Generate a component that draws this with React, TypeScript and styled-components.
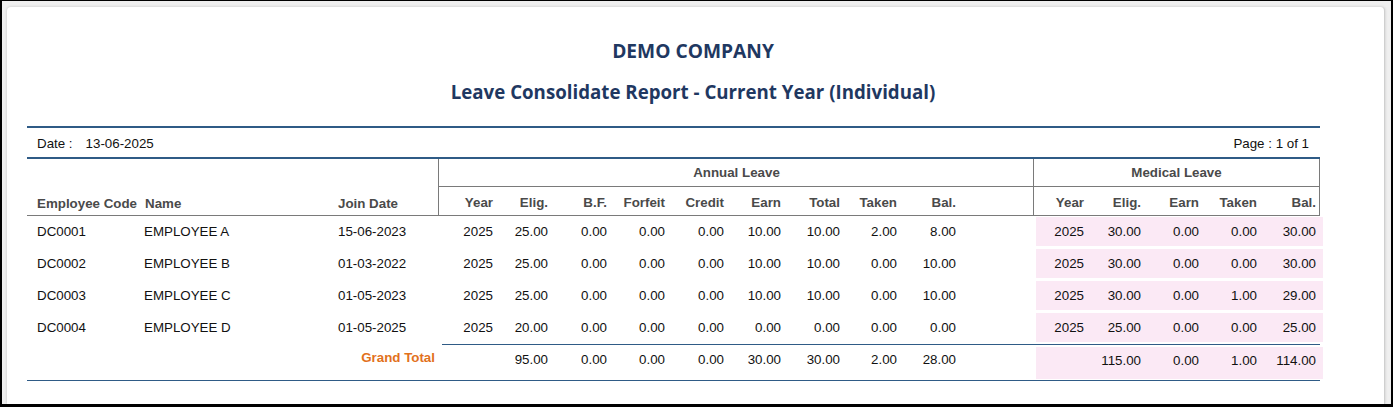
import styled, { createGlobalStyle } from "styled-components"

const GlobalStyle = createGlobalStyle`
  html, body { margin: 0; padding: 0; background: #000; }
  body { font-family: "Liberation Sans", Arial, sans-serif; }
  * { box-sizing: border-box; }
`

const annualCols = [58, 55, 59, 58, 59, 57, 59, 57, 59, 74]
const medicalCols = [52, 57, 58, 58, 59]

const annualHeads = ["Year", "Elig.", "B.F.", "Forfeit", "Credit", "Earn", "Total", "Taken", "Bal.", ""]
const medicalHeads = ["Year", "Elig.", "Earn", "Taken", "Bal."]

const rows = [
  {
    code: "DC0001", name: "EMPLOYEE A", join: "15-06-2023",
    annual: ["2025", "25.00", "0.00", "0.00", "0.00", "10.00", "10.00", "2.00", "8.00", ""],
    medical: ["2025", "30.00", "0.00", "0.00", "30.00"],
  },
  {
    code: "DC0002", name: "EMPLOYEE B", join: "01-03-2022",
    annual: ["2025", "25.00", "0.00", "0.00", "0.00", "10.00", "10.00", "0.00", "10.00", ""],
    medical: ["2025", "30.00", "0.00", "0.00", "30.00"],
  },
  {
    code: "DC0003", name: "EMPLOYEE C", join: "01-05-2023",
    annual: ["2025", "25.00", "0.00", "0.00", "0.00", "10.00", "10.00", "0.00", "10.00", ""],
    medical: ["2025", "30.00", "0.00", "1.00", "29.00"],
  },
  {
    code: "DC0004", name: "EMPLOYEE D", join: "01-05-2025",
    annual: ["2025", "20.00", "0.00", "0.00", "0.00", "0.00", "0.00", "0.00", "0.00", ""],
    medical: ["2025", "25.00", "0.00", "0.00", "25.00"],
  },
]

const totals = {
  annual: ["", "95.00", "0.00", "0.00", "0.00", "30.00", "30.00", "2.00", "28.00", ""],
  medical: ["", "115.00", "0.00", "1.00", "114.00"],
}

const tpl = (cols: number[]) => cols.map((c) => `${c}px`).join(" ")

const App = () => {
  return (
    <>
      <GlobalStyle />
      <Frame>
        <Panel>
          <Report>
            <TitleBlock>
              <Company>DEMO COMPANY</Company>
              <ReportName>Leave Consolidate Report - Current Year (Individual)</ReportName>
            </TitleBlock>

            <DateRow>
              <span>
                Date :<DateValue>13-06-2025</DateValue>
              </span>
              <span>Page : 1 of 1</span>
            </DateRow>

            <HeadRow>
              <LeftHead>Employee Code</LeftHead>
              <LeftHead>Name</LeftHead>
              <LeftHead>Join Date</LeftHead>
              <Group>
                <GroupTitle>Annual Leave</GroupTitle>
                <ColGrid cols={tpl(annualCols)}>
                  {annualHeads.map((h, i) => (
                    <HeadCell key={i}>{h}</HeadCell>
                  ))}
                </ColGrid>
              </Group>
              <Group last>
                <GroupTitle>Medical Leave</GroupTitle>
                <ColGrid cols={tpl([54, 57, 58, 58, 59])}>
                  {medicalHeads.map((h, i) => (
                    <HeadCell key={i}>{h}</HeadCell>
                  ))}
                </ColGrid>
              </Group>
            </HeadRow>

            {rows.map((r) => (
              <DataRow key={r.code}>
                <TextCell pad={10}>{r.code}</TextCell>
                <TextCell pad={5}>{r.name}</TextCell>
                <TextCell pad={6}>{r.join}</TextCell>
                <ColGrid cols={tpl(annualCols)}>
                  {r.annual.map((v, i) => (
                    <NumCell key={i}>{v}</NumCell>
                  ))}
                </ColGrid>
                <Pink cols={tpl(medicalCols)}>
                  {r.medical.map((v, i) => (
                    <NumCell key={i}>{v}</NumCell>
                  ))}
                </Pink>
              </DataRow>
            ))}

            <TotalRow>
              <GrandLabel>Grand Total</GrandLabel>
              <TotalBlock>
                <ColGrid cols={tpl([55, ...annualCols.slice(1)])}>
                  {totals.annual.map((v, i) => (
                    <NumCell key={i}>{v}</NumCell>
                  ))}
                </ColGrid>
                <Pink cols={tpl(medicalCols)}>
                  {totals.medical.map((v, i) => (
                    <NumCell key={i}>{v}</NumCell>
                  ))}
                </Pink>
              </TotalBlock>
            </TotalRow>
          </Report>
        </Panel>
      </Frame>
    </>
  )
}

export default App

const Frame = styled.div`
  width: 1393px;
  height: 407px;
  border-style: solid;
  border-color: #000;
  border-width: 1px 2px 3px 2px;
  background: #efefef;
  padding: 6px 6px 0 5px;
`

const Panel = styled.div`
  height: 100%;
  background: #fff;
  border-radius: 4px 4px 0 0;
  border-right: 1px solid #cfcfcf;
  box-shadow: 0 0 3px rgba(0, 0, 0, 0.18);
  padding-left: 20px;
`

const Report = styled.div`
  width: 1293px;
  font-size: 13.33px;
`

const TitleBlock = styled.div`
  height: 121px;
  padding: 32px 0 0 39px;
  text-align: center;
  color: #1f3861;
  font-family: "Open Sans", "Noto Sans", sans-serif;
  font-weight: 700;
  border-bottom: 2px solid #2f5b86;
`

const Company = styled.div`
  font-size: 19.2px;
  line-height: 24px;
`

const ReportName = styled.div`
  margin-top: 17px;
  font-size: 18.7px;
  line-height: 24px;
`

const DateRow = styled.div`
  height: 31px;
  display: flex;
  justify-content: space-between;
  align-items: center;
  padding: 1px 11px 0 10px;
  color: #111;
  border-bottom: 2px solid #2f5b86;
`

const DateValue = styled.span`
  margin-left: 13px;
`

const HeadRow = styled.div`
  display: grid;
  grid-template-columns: 112px 193px 107px 595px 286px;
  border-bottom: 1px solid #7a7a7a;
`

const LeftHead = styled.div`
  align-self: end;
  padding: 0 0 4px 10px;
  font-weight: 700;
  color: #4a4a4a;
  white-space: nowrap;
  &:nth-child(2),
  &:nth-child(3) {
    padding-left: 6px;
  }
`

const Group = styled.div<{ last?: boolean }>`
  border-left: 1px solid #7a7a7a;
  border-right: ${(p) => (p.last ? "1px solid #7a7a7a" : "none")};
  margin-left: -1px;
`

const GroupTitle = styled.div`
  height: 28px;
  line-height: 28px;
  text-align: center;
  font-weight: 700;
  color: #4a4a4a;
  border-bottom: 1px solid #7a7a7a;
`

const ColGrid = styled.div<{ cols: string }>`
  display: grid;
  grid-template-columns: ${(p) => p.cols};
`

const HeadCell = styled.div`
  height: 28px;
  padding: 8px 4px 0 0;
  text-align: right;
  font-weight: 700;
  color: #4a4a4a;
`

const DataRow = styled.div`
  display: grid;
  grid-template-columns: 112px 193px 107px 595px 286px;
  height: 32px;
  padding-bottom: 2px;
  align-items: center;
`

const TextCell = styled.div<{ pad: number }>`
  padding-left: ${(p) => p.pad}px;
  color: #111;
  white-space: nowrap;
`

const NumCell = styled.div`
  padding-right: 4px;
  text-align: right;
  color: #111;
  white-space: nowrap;
`

const Pink = styled(ColGrid)`
  align-self: stretch;
  align-items: center;
  margin: 1px -3px 0 2px;
  padding-right: 3px;
  background: #fbe9f5;
`

const TotalRow = styled.div`
  display: grid;
  grid-template-columns: 412px 881px;
  height: 37px;
  border-bottom: 1px solid #2f5b86;
`

const GrandLabel = styled.div`
  padding: 6px 4px 0 0;
  text-align: right;
  font-weight: 700;
  color: #e2711d;
`

const TotalBlock = styled.div`
  display: grid;
  grid-template-columns: 592px 286px;
  margin-left: 3px;
  border-top: 1px solid #2f5b86;
  align-items: center;
  & > ${Pink} {
    margin: 2px -3px 1px 2px;
  }
  ${NumCell} {
    margin-top: -6px;
  }
`
